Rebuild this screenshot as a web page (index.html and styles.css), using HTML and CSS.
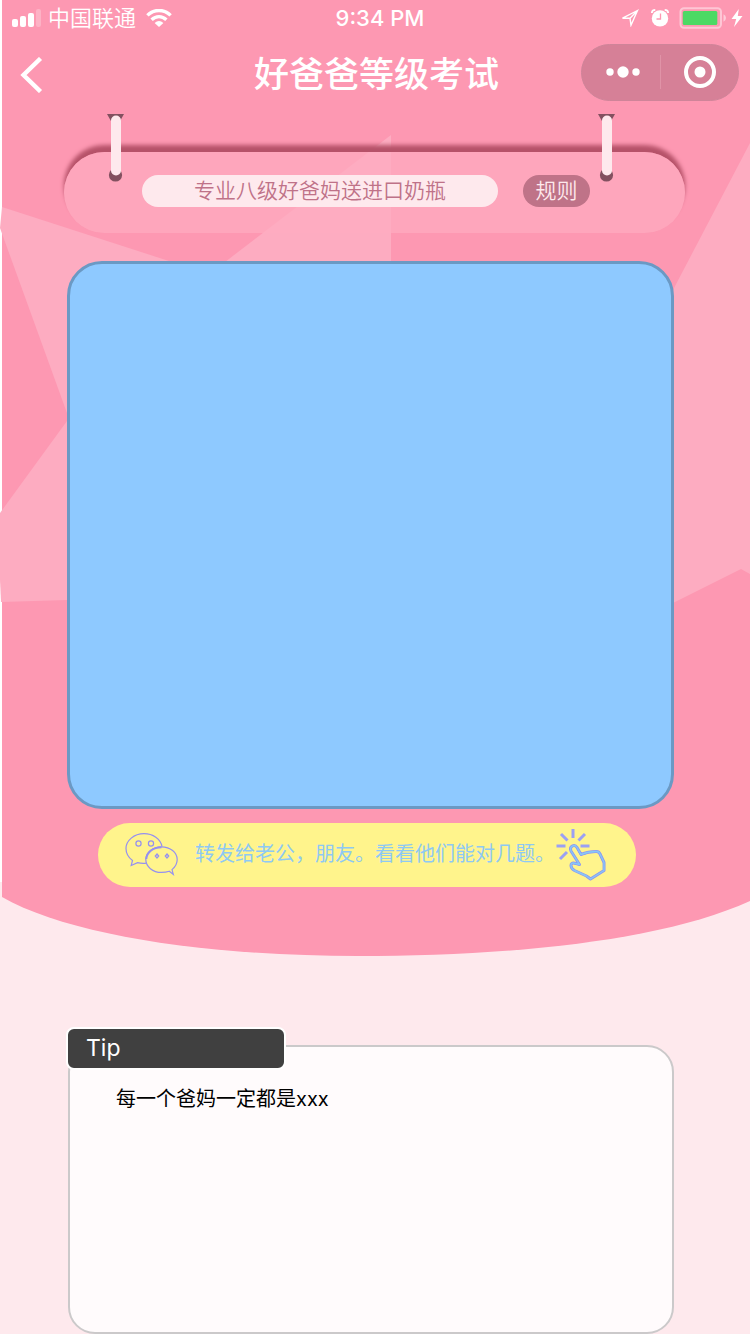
FILE: index.html
```html
<!DOCTYPE html>
<html lang="zh-CN">
<head>
<meta charset="utf-8">
<meta name="viewport" content="width=device-width, initial-scale=1">
<title>好爸爸等级考试</title>
<link rel="stylesheet" href="styles.css">
</head>
<body>
<div class="page">
  <svg class="backdrop" viewBox="0 0 750 957" preserveAspectRatio="none" aria-hidden="true">
    <path d="M0 0H2V882H0Z" fill="#fff"/>
    <path d="M2 0H750V901C660 942 506 956 358 956S70 936 2 897Z" fill="#fd98b2"/>
    <g fill="#fdacc1">
      <path d="M2 207L172 262V600L67 413L0 228Z"/>
      <path d="M67 421L0 513V580L1 602L67 600Z"/>
      <path d="M391 135V262H225Z"/>
      <path d="M750 143L673 290V603L741 569L750 574Z"/>
    </g>
  </svg>

  <header class="status">
    <div class="status-left">
      <svg width="30" height="18" viewBox="0 0 30 18" fill="#fff" aria-hidden="true">
        <rect x="0" y="10" width="6" height="8" rx="2"/>
        <rect x="8" y="7" width="6" height="11" rx="2"/>
        <rect x="16" y="4" width="6" height="14" rx="2"/>
        <rect x="24" y="0" width="5" height="18" rx="2" opacity=".25"/>
      </svg>
      <span class="carrier">中国联通</span>
      <svg class="wifi" width="26" height="18" viewBox="0 0 26 18" aria-hidden="true">
        <path d="M1.4 6.4C8 -.2 18 -.2 24.6 6.4M5.6 10.8C10 6.6 16 6.6 20.4 10.8" fill="none" stroke="#fff" stroke-width="3.4"/>
        <path d="M8.6 13.9Q13 10.2 17.4 13.9L13 18Z" fill="#fff"/>
      </svg>
    </div>
    <time class="clock">9:34 PM</time>
    <div class="status-right">
      <svg width="18" height="18" viewBox="0 0 18 18" aria-hidden="true">
        <path d="M16.5 1.5L1.5 9.2H9L10 16.2Z M9 9.2L16.5 1.5" fill="none" stroke="#fff" stroke-width="1.4"/>
      </svg>
      <svg class="alarm" width="18" height="18" viewBox="0 0 18 18" aria-hidden="true">
        <circle cx="9" cy="9.4" r="8.2" fill="#fff"/>
        <path d="M.8 4Q1 1 4.3 .9M17.2 4Q17 1 13.7 .9" fill="none" stroke="#fff" stroke-width="1.8"/>
        <path d="M9.5 4.5V10H5.5" fill="none" stroke="#fd98b2" stroke-width="1.3"/>
      </svg>
      <svg class="battery" width="48" height="22" viewBox="0 0 48 22" aria-hidden="true">
        <rect x="1.5" y="1.2" width="40.5" height="19.6" rx="3.5" fill="none" stroke="#fff" stroke-opacity=".45" stroke-width="2"/>
        <rect x="3.8" y="4" width="34.5" height="14" rx="1.5" fill="#4cd964"/>
        <path d="M44.5 7.2Q47 8.5 47 11T44.500 14.800Z" fill="#fff" opacity=".5"/>
      </svg>
      <svg class="bolt" width="12" height="18" viewBox="0 0 12 18" aria-hidden="true">
        <path d="M7.8 0L.5 10H5.2L3 18L11.5 7H6.8Z" fill="#fff"/>
      </svg>
    </div>
  </header>

  <nav class="nav">
    <button class="back" type="button" aria-label="返回">
      <svg width="24" height="36" viewBox="0 0 24 36" aria-hidden="true">
        <path d="M20.500 1.500L3.500 18L20.500 34.500" fill="none" stroke="#fff" stroke-width="4.400"/>
      </svg>
    </button>
    <h1 class="title">好爸爸等级考试</h1>
    <div class="capsule">
      <button class="capsule-btn" type="button" aria-label="更多">
        <svg width="36" height="12" viewBox="0 0 36 12" fill="#fff" aria-hidden="true">
          <circle cx="5" cy="6" r="3.7"/><circle cx="18" cy="6" r="5.7"/><circle cx="31" cy="6" r="3.7"/>
        </svg>
      </button>
      <button class="capsule-btn" type="button" aria-label="关闭">
        <svg width="32" height="32" viewBox="0 0 32 32" aria-hidden="true">
          <circle cx="16" cy="16" r="14" fill="none" stroke="#fff" stroke-width="4"/>
          <circle cx="16" cy="16" r="5.5" fill="#fff"/>
        </svg>
      </button>
    </div>
  </nav>

  <main>
    <section class="banner">
      <svg class="pin pin-left" width="18" height="68" viewBox="0 0 18 68" aria-hidden="true">
        <path d="M0 0H17L8.5 15Z" fill="#82505f"/>
        <circle cx="8.5" cy="61" r="6.6" fill="#82505f"/>
        <rect x="4" y="1.5" width="10" height="60" rx="5" fill="#fee9ed"/>
      </svg>
      <svg class="pin pin-right" width="18" height="68" viewBox="0 0 18 68" aria-hidden="true">
        <path d="M0 0H17L8.5 15Z" fill="#82505f"/>
        <circle cx="8.5" cy="61" r="6.6" fill="#82505f"/>
        <rect x="4" y="1.5" width="10" height="60" rx="5" fill="#fee9ed"/>
      </svg>
      <p class="notice">专业八级好爸妈送进口奶瓶</p>
      <button class="rules" type="button">规则</button>
    </section>

    <section class="board"></section>

    <button class="share" type="button">
      <svg class="chat" width="54" height="44" viewBox="0 0 54 44" fill="none" stroke="#9590f0" stroke-width="1.2" aria-hidden="true">
        <path d="M37 14.5C35.5 7 28 1.7 19 1.7C9 1.7 1 8.5 1 16.5C1 21.5 3.5 25.5 7.5 28.5L6.2 33.5L12.5 30.7C15 31.3 18 31.6 21.5 31.2"/>
        <path d="M36.5 14.8C27.8 14.8 20.8 20.5 20.8 27.6S27.8 40.400 36.500 40.400C39.500 40.400 42 40 44.300 39.200L48.300 42.400L47 37.600C50.300 35 52.200 31.500 52.200 27.600C52.200 20.500 45.200 14.800 36.500 14.800Z"/>
        <path d="M36.5 15.3C28 15.3 21.5 20.5 21.3 27" stroke-width="2"/>
        <circle cx="13.5" cy="11.5" r="2.6"/>
        <circle cx="26" cy="11.5" r="2.6"/>
        <path d="M32 22L33.700 24L32 26L30.300 24ZM42 22L43.700 24L42 26L40.300 24Z" stroke-width="1.300"/>
      </svg>
      <span class="share-text">转发给老公，朋友。看看他们能对几题。</span>
      <svg class="tap" width="50" height="53" viewBox="0 0 50 53" fill="none" stroke-linejoin="round" aria-hidden="true">
        <path d="M17 1V10M5 6L11.500 12.500M29 6L22.500 12.500M.5 18H9.500M24.500 18H33.500M4 31L11 24" stroke="#9ba0f4" stroke-width="3"/>
        <path d="M23.500 36.500L15 23C13 18.500 18.500 15.500 21 19.500L25 26.500Q32 23.500 40.500 23.500Q43 23.500 44 26L48 34.500V42.500L34.500 51L30.500 48L18.500 42.500Q15 40.500 15 37.500Q15 34.500 18.500 35.200Z" stroke="#8f94f2" stroke-width="3"/>
        <path d="M23.500 36.500L15 23C13 18.500 18.500 15.500 21 19.500L25 26.500Q32 23.500 40.500 23.500Q43 23.500 44 26L48 34.500V42.500L34.500 51L30.500 48L18.500 42.500Q15 40.500 15 37.500Q15 34.500 18.500 35.200Z" stroke="#86c9f7" stroke-width="1.400"/>
        <path d="M16.500 22C16.500 19.500 18.500 19 19.800 21L24.300 28.600Q32 25.500 40 25.500L42.200 26.700L46.200 35V41.500L34.600 48.600L31.300 46.200L19.500 40.700Q16.800 39 16.800 37.600L18.600 37L26 39.300L27 38.500Z" fill="#fff48c"/>
      </svg>
    </button>

    <section class="tip">
      <h2 class="tip-tab">Tip</h2>
      <p class="tip-text">每一个爸妈一定都是xxx</p>
    </section>
  </main>
</div>
</body>
</html>
```

FILE: styles.css
```css
* {
  box-sizing: border-box;
}

body {
  min-height: 100vh;
  margin: 0;
  background: #fff;
  font-family: Inter, "Noto Sans CJK SC", sans-serif;
  color: #fff;
}

h1,
h2,
p {
  margin: 0;
}

button {
  border: 0;
  padding: 0;
  background: none;
  color: inherit;
  font: inherit;
}

svg {
  display: block;
  flex: none;
}

.page {
  position: relative;
  background: #fee9ed;
}

.backdrop {
  position: absolute;
  top: 0;
  left: 0;
  width: 100%;
  height: 957px;
}

.status,
.nav,
main {
  position: relative;
}

.status {
  display: grid;
  grid-template-columns: 1fr auto 1fr;
  align-items: center;
  height: 36px;
  padding: 0 7px 0 12px;
}

.status-left,
.status-right {
  display: flex;
  align-items: center;
}

.status-right {
  justify-content: flex-end;
}

.carrier {
  margin-left: 6px;
  font-size: 22px;
  font-weight: 350;
  line-height: 32px;
}

.wifi {
  margin-left: 10px;
}

.clock {
  padding-left: 5px;
  font-size: 22px;
  font-weight: 500;
  line-height: 36px;
}

.alarm {
  margin-left: 12px;
}

.battery {
  margin-left: 10px;
}

.bolt {
  margin-left: 4px;
}

.nav {
  display: grid;
  grid-template-columns: 1fr auto 1fr;
  align-items: center;
  height: 76px;
  padding: 0 11px 4px 12px;
}

.back {
  justify-self: start;
  padding: 6px 8px 0;
}

.title {
  padding: 4px 0 0 2px;
  font-size: 35px;
  font-weight: 500;
  line-height: 48px;
}

.capsule {
  display: flex;
  justify-self: end;
  width: 158px;
  height: 57px;
  border: 1px solid #cf8499;
  border-radius: 29px;
  background: #d68097;
}

.capsule-btn {
  display: flex;
  flex: 1;
  align-items: center;
  justify-content: center;
}

.capsule-btn:first-child {
  padding-left: 2px;
  background: linear-gradient(#e093a7, #e093a7) right center / 1px 34px no-repeat;
}

.banner {
  position: relative;
  display: flex;
  gap: 25px;
  margin: 40px 65px 0 64px;
  padding: 23px 95px 26px 78px;
  border-radius: 41px;
  background: rgba(253, 172, 193, 0.7);
  box-shadow: 0 -7px 4px #b65269;
}

.pin {
  position: absolute;
  top: -38px;
}

.pin-left {
  left: 43px;
}

.pin-right {
  right: 69px;
}

.notice {
  flex: 1;
  border-radius: 16px;
  background: #fee9ed;
  color: #bf7288;
  font-size: 21px;
  font-weight: 350;
  line-height: 32px;
  text-align: center;
}

.rules {
  width: 67px;
  border-radius: 16px;
  background: #bf7388;
  color: #fee9ed;
  font-size: 21px;
  font-weight: 350;
  line-height: 32px;
}

.board {
  min-height: 548px;
  margin: 28px 76px 0 67px;
  border: 3px solid #6b99c4;
  border-radius: 35px;
  background: #8ec9ff;
}

.share {
  display: flex;
  align-items: center;
  width: calc(100% - 212px);
  height: 64px;
  margin: 14px 114px 0 98px;
  padding: 0 30px 2px 27px;
  border-radius: 32px;
  background: #fff48c;
  color: #8ec9f4;
  font-size: 20px;
  line-height: 30px;
}

.share-text {
  flex: 1;
  margin-left: 16px;
  text-align: left;
  white-space: nowrap;
}

.tip {
  min-height: 289px;
  margin: 158px 76px -3px 68px;
  border: 2px solid #cbc9ca;
  border-radius: 27px;
  background: #fffbfc;
  color: #000;
}

.tip-tab {
  width: 220px;
  margin: -20px 0 0 -4px;
  padding: 0 0 1px 18px;
  border: 2px solid #fff;
  border-radius: 8px;
  background: #404040;
  color: #fff;
  font-size: 23px;
  font-weight: 400;
  line-height: 38px;
}

.tip-text {
  padding: 14px 46px;
  font-size: 20px;
  line-height: 30px;
}
```
